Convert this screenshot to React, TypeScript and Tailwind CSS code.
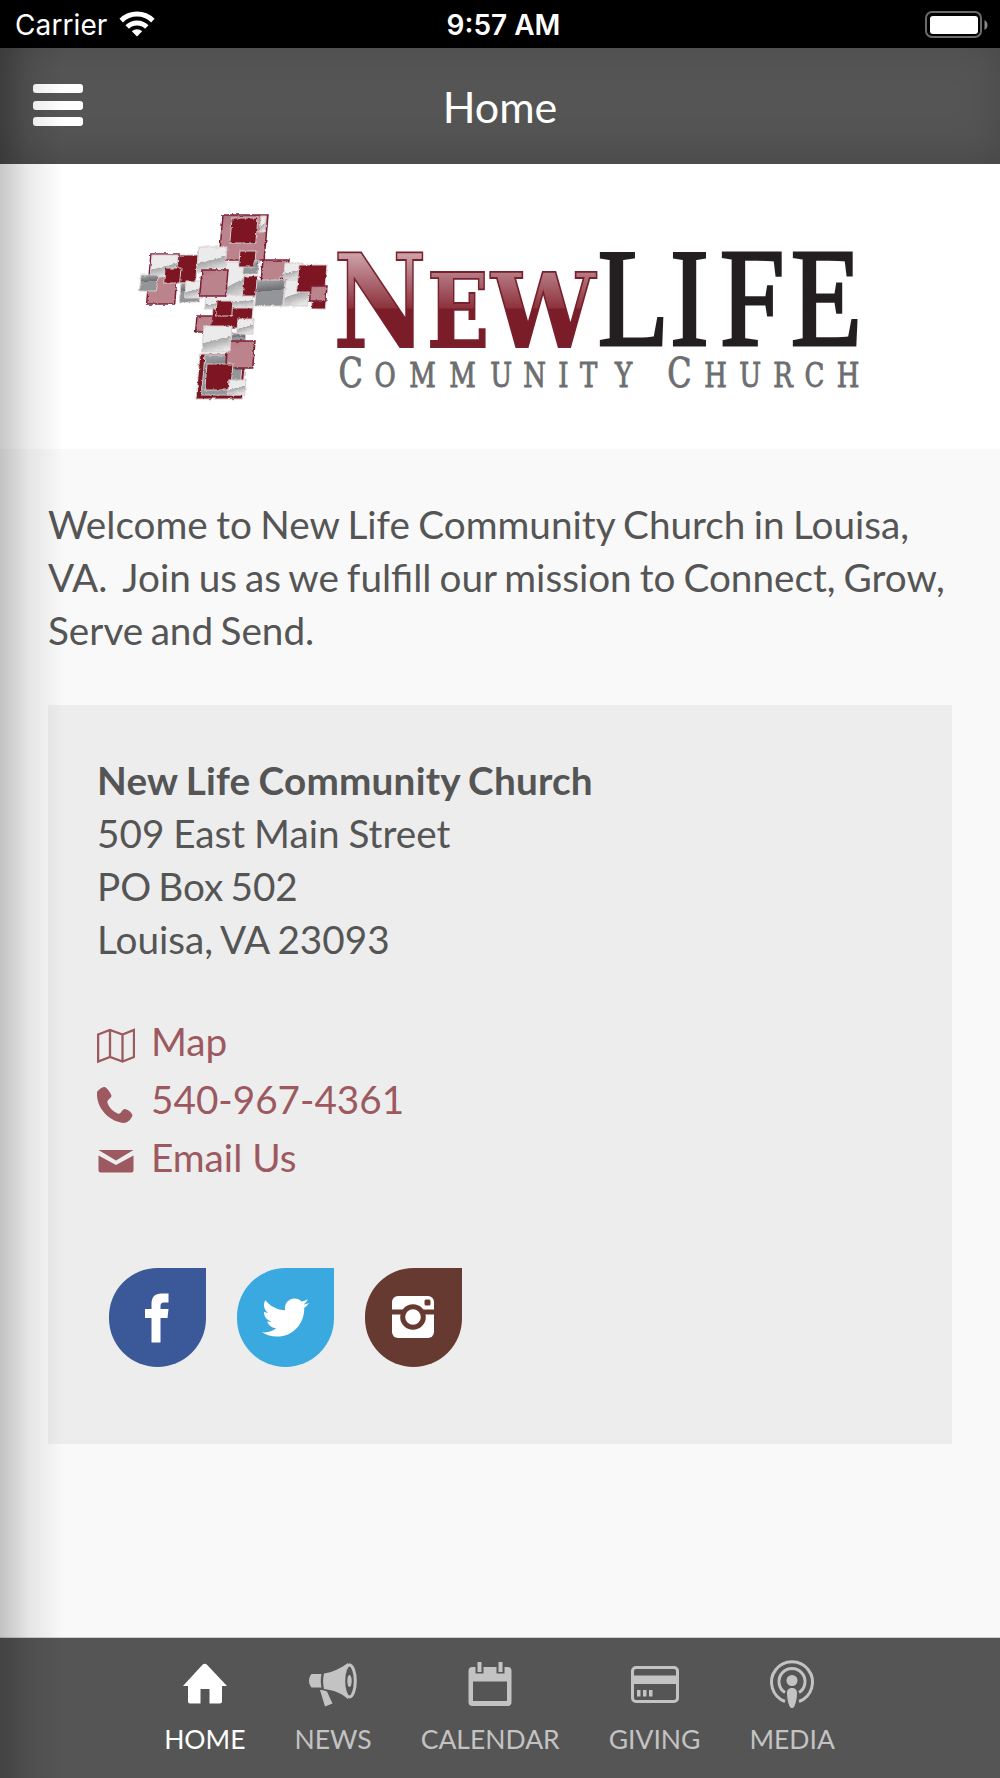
import type { ReactNode } from "react";
import { FaTwitter } from "react-icons/fa";

function StatusBar() {
  return (
    <div className="grid h-12 grid-cols-3 items-center bg-black pl-[15px] pr-3 pt-px font-['Inter',sans-serif] text-[28px] leading-none text-white">
      <div className="flex items-center gap-3">
        <span className="tracking-[0.1px]">Carrier</span>
        <svg className="-mt-px" width="36" height="26" viewBox="0 0 36 26" fill="none" stroke="white" strokeWidth="5">
          <path d="M2.2 9.6a22.5 22.5 0 0 1 31.6 0" />
          <path d="M8.2 16a14 14 0 0 1 19.6 0" />
          <path d="M12.8 20.3a7.6 7.6 0 0 1 10.4 0L18 25.5z" fill="white" stroke="none" />
        </svg>
      </div>
      <span className="pl-1 text-center font-semibold">9:57 AM</span>
      <svg className="justify-self-end" width="63" height="28" viewBox="0 0 63 28">
        <rect x="1" y="1" width="55" height="25" rx="6" fill="none" stroke="#6b6b6b" strokeWidth="2" />
        <rect x="5" y="5" width="48" height="18" rx="3" fill="white" />
        <path d="M59.500 9c4 2 4 8 0 10z" fill="#8a8a8a" />
      </svg>
    </div>
  );
}

function Header() {
  return (
    <header className="grid h-[116px] grid-cols-3 items-center bg-[#555] px-[33px] shadow-[inset_0_-7px_40px_rgba(0,0,0,0.17)]">
      <button className="-mt-0.5 flex w-[50px] flex-col gap-[7.5px]" aria-label="Menu">
        <span className="h-[9px] rounded-[3px] bg-white" />
        <span className="h-[9px] rounded-[3px] bg-white" />
        <span className="h-[9px] rounded-[3px] bg-white" />
      </button>
      <h1 className="mt-px text-center text-[43px] leading-none text-white">Home</h1>
    </header>
  );
}

// x, y, width, height, fill
const TILES: [number, number, number, number, string][] = [
  [223, 215, 45, 45, "url(#rose)"],
  [261, 216, 5, 16, "url(#silver)"],
  [232, 218, 26, 25, "#7d1824"],
  [179, 255, 19, 28, "#7d1824"],
  [181, 283, 20, 19, "url(#gray)"],
  [151, 254, 28, 50, "url(#rose)"],
  [152, 255, 26, 22, "url(#silver)"],
  [165, 268, 16, 15, "#7d1824"],
  [141, 275, 17, 16, "url(#gray)"],
  [226, 262, 22, 40, "url(#silver)"],
  [199, 247, 28, 25, "url(#silver)"],
  [206, 295, 48, 14, "url(#silver)"],
  [186, 281, 18, 17, "url(#silver)"],
  [202, 270, 26, 26, "url(#rose)"],
  [244, 260, 15, 14, "url(#gray)"],
  [244, 276, 14, 20, "#7d1824"],
  [240, 251, 16, 16, "#7d1824"],
  [263, 260, 26, 22, "url(#rose)"],
  [280, 277, 8, 8, "#7d1824"],
  [285, 263, 18, 16, "url(#silver)"],
  [286, 280, 24, 26, "url(#silver)"],
  [257, 280, 28, 26, "url(#gray)"],
  [313, 290, 14, 19, "#7d1824"],
  [299, 265, 28, 27, "#7d1824"],
  [311, 286, 16, 15, "url(#rose)"],
  [213, 308, 40, 20, "#7d1824"],
  [217, 301, 16, 15, "#7d1824"],
  [197, 316, 16, 16, "url(#rose)"],
  [232, 333, 14, 10, "url(#gray)"],
  [238, 319, 16, 15, "url(#silver)"],
  [200, 354, 46, 45, "#7d1824"],
  [205, 355, 38, 40, "url(#gray)"],
  [228, 341, 27, 27, "url(#rose)"],
  [204, 326, 28, 26, "url(#silver)"],
  [207, 364, 26, 26, "#7d1824"],
  [229, 380, 17, 15, "url(#silver)"],
];

function Logo() {
  return (
    <svg className="block w-full" height="285" viewBox="0 164 1000 285">
      <defs>
        <linearGradient id="silver" x1="0.2" y1="0" x2="0.5" y2="1">
          <stop offset="0.55" stopColor="#ebebeb" />
          <stop offset="0.57" stopColor="#a9a9ab" />
          <stop offset="1" stopColor="#e6e6e6" />
        </linearGradient>
        <linearGradient id="gray" x1="0" y1="0" x2="0.1" y2="1">
          <stop offset="0" stopColor="#a3a5a8" />
          <stop offset="0.45" stopColor="#6c6d70" />
          <stop offset="0.46" stopColor="#939598" />
        </linearGradient>
        <linearGradient id="rose" x1="0" y1="0" x2="0.3" y2="1">
          <stop offset="0" stopColor="#b07680" />
          <stop offset="0.3" stopColor="#bb838c" />
        </linearGradient>
        <linearGradient id="wine" gradientUnits="userSpaceOnUse" x1="0" y1="252" x2="0" y2="347">
          <stop offset="0" stopColor="#cfa6ac" />
          <stop offset="0.3" stopColor="#ad6b74" />
          <stop offset="0.59" stopColor="#8d323c" />
          <stop offset="0.6" stopColor="#7a1d28" />
        </linearGradient>
        <filter id="rough">
          <feTurbulence type="fractalNoise" baseFrequency="0.25" numOctaves="2" seed="4" />
          <feDisplacementMap in="SourceGraphic" scale="3" xChannelSelector="R" yChannelSelector="G" />
        </filter>
      </defs>

      <g filter="url(#rough)">
        {TILES.map(([x, y, w, h, fill]) => (
          <g key={`${x}-${y}`} transform={`translate(${x} ${y}) skewX(-5)`}>
            <rect
              width={w}
              height={h}
              fill={fill}
              stroke={fill === "url(#rose)" ? "#7d1f36" : "#d6cdcf"}
              strokeWidth={fill === "url(#rose)" ? 1.5 : 1}
            />
          </g>
        ))}
      </g>

      <g fill="url(#wine)" stroke="#78202d" strokeWidth="1.800" fontFamily="DejaVu Serif" fontWeight="700">
        <text x="333.500" y="346.500" fontSize="129" textLength="93" lengthAdjust="spacingAndGlyphs">N</text>
        <text x="427" y="346.500" fontSize="103" textLength="62" lengthAdjust="spacingAndGlyphs">E</text>
        <text x="491" y="346.500" fontSize="103" textLength="104.500" lengthAdjust="spacingAndGlyphs">W</text>
      </g>
      <g transform="scale(0.84 1)" fontFamily="Liberation Serif">
        <text x="711.500 797.500 857 941.500" y="345" fontSize="139" fill="#231f20" stroke="#231f20" strokeWidth="3">
          LIFE
        </text>
      </g>
      <g
        transform="scale(0.86 1)"
        fill="#6d6e71"
        stroke="#6d6e71"
        strokeWidth="0.900"
        fontFamily="DejaVu Serif Condensed, DejaVu Serif"
        fontSize="33.500"
      >
        <text y="387">
          <tspan x="393.500" fontSize="41">C</tspan>
          <tspan x="435.500 476 522.500 570 608.500 649 674.500 715">OMMUNITY</tspan>
        </text>
        <text y="387">
          <tspan x="776" fontSize="41">C</tspan>
          <tspan x="819 859.500 899 935.500 973">HURCH</tspan>
        </text>
      </g>
    </svg>
  );
}

function ContactLink({ icon, children }: { icon: ReactNode; children: ReactNode }) {
  return (
    <a href="#" className="flex h-[58px] items-center gap-4 text-[#9c5960]">
      {icon}
      <span>{children}</span>
    </a>
  );
}

function SocialButton({ color, label, children }: { color: string; label: string; children: ReactNode }) {
  return (
    <a
      href="#"
      aria-label={label}
      className={`flex h-[99px] w-[97px] items-center justify-center rounded-full rounded-tr-none text-white ${color}`}
    >
      {children}
    </a>
  );
}

function ContactCard() {
  return (
    <section className="mt-12 h-[739px] bg-[#ededed] px-[49px] pt-[49px]">
      <address className="whitespace-nowrap not-italic">
        <strong className="block tracking-[0.2px] [word-spacing:-1.4px]">New Life Community Church</strong>
        <span className="block [word-spacing:-1px]">509 East Main Street</span>
        <span className="block [word-spacing:-2.8px]">PO Box 502</span>
        <span className="block [word-spacing:-1.5px]">Louisa, VA 23093</span>
      </address>

      <div className="mt-[46px]">
        <ContactLink
          icon={
            <svg className="mt-2.5" width="38" height="36" viewBox="0.5 0 38 36" fill="none" stroke="currentColor" strokeWidth="2.3">
              <path d="M1.600 6.500 13.500 2l12.500 4.500L37.500 2v27L26 33.500 13.500 29 1.600 33.500zM13.500 2v27M26 6.500v27" />
            </svg>
          }
        >
          Map
        </ContactLink>
        <ContactLink
          icon={
            <svg className="-mr-px -ml-px mt-3" width="40" height="38" viewBox="0 0 40 38" fill="currentColor">
              <path d="M1 6C3 3 6 1 9 1c3 2 5 5 6.500 8.500 0 3-5 4-4 7.500 2 5 5 8 10 10.500 4 1.500 4-4.500 7.500-4.500 3 .500 6 3 7.500 6-1 4-4 7-8 8C14 36 0 23 1 6z" />
            </svg>
          }
        >
          540-967-4361
        </ContactLink>
        <ContactLink
          icon={
            <svg className="mt-2" width="38" height="24" viewBox="0.5 0 38 24" fill="currentColor">
              <path d="M2 1h35L19.500 11.500zM2 6.500 19.500 16 37 6.500V21.500a2 2 0 0 1-2 2H4a2 2 0 0 1-2-2z" />
            </svg>
          }
        >
          Email Us
        </ContactLink>
      </div>

      <div className="ml-3 mt-[82px] flex gap-[31px]">
        <SocialButton color="bg-[#3b5998]" label="Facebook">
          <svg className="-ml-0.5" width="24" height="50" viewBox="0 0 24 50" fill="currentColor">
            <path d="M6.500 49.500V25H0v-9h6.500v-4.500C6.500 4 9.500.500 16.500.500H23.500V9.500H19c-2.700 0-3.500 1.200-3.500 3.500v3h8l-1 9h-7v24.500z" />
          </svg>
        </SocialButton>
        <SocialButton color="bg-[#3aa9e0]" label="Twitter">
          <FaTwitter size={47} />
        </SocialButton>
        <SocialButton color="bg-[#663a31]" label="Instagram">
          <svg className="-ml-0.5 -mt-px" width="42" height="42" viewBox="0 0 42 42">
            <rect width="42" height="42" rx="6" fill="white" />
            <path d="M0 13.500h42v5H0z" fill="#663a31" />
            <circle cx="21" cy="21" r="10.300" fill="white" stroke="#663a31" strokeWidth="5" />
            <rect x="32.500" y="3.500" width="6" height="6" rx="1.500" fill="#663a31" />
          </svg>
        </SocialButton>
      </div>
    </section>
  );
}

function TabItem({ label, active, children }: { label: string; active?: boolean; children: ReactNode }) {
  return (
    <a href="#" className={`flex flex-col items-center gap-[13px] ${active ? "text-white" : "text-[#c3c3c3]"}`}>
      <svg width="50" height="50" viewBox="0 0 50 50" fill="currentColor">
        {children}
      </svg>
      <span className="text-[26.5px] leading-8">{label}</span>
    </a>
  );
}

function TabBar() {
  return (
    <nav className="flex h-[141px] justify-center gap-[49px] border-t border-[#d0d0d0] bg-[#555] pr-px pt-[22px]">
      <TabItem label="HOME" active>
        <path d="M22.500 4.800a3 3 0 0 1 4.500 0L47 26h-5v15.500a2 2 0 0 1-2 2H29.500V29h-9v14.500H10a2 2 0 0 1-2-2V26H3z" />
      </TabItem>
      <TabItem label="NEWS">
        <path d="M3.500 14h10c-1 5-1 9 0 13.500h-10c-3.300-4-3.300-9.500 0-13.500zM16 13.500C26 12 33 8 40 3v36c-6-5-12-8.500-24-10-1-5-1.300-10 0-15.500zM12 30c3 0 5.500.700 7 1.500l5.500 12-7.500 3z" />
        <ellipse cx="41.500" cy="21" rx="5.800" ry="16" fill="#555" stroke="currentColor" strokeWidth="3" />
        <ellipse cx="41.500" cy="21" rx="2.200" ry="6" />
      </TabItem>
      <TabItem label="CALENDAR">
        <path
          fillRule="evenodd"
          d="M12.500 2h4v10h-4zM33.500 2h4v10h-4zM7.500 7H10.500v6.500h8V7H31.500v6.500h8V7h3a4 4 0 0 1 4 4v31a4 4 0 0 1-4 4h-35a4 4 0 0 1-4-4V11a4 4 0 0 1 4-4zM8 21.500v19.500h34V21.500z"
        />
      </TabItem>
      <TabItem label="GIVING">
        <rect x="2.500" y="7.500" width="45" height="34" rx="3.500" fill="none" stroke="currentColor" strokeWidth="3" />
        <path d="M2 15.500h46V24H2zM7 30h3.500v6.500H7zM13 30h3.500v6.500H13zM19 30h3.500v6.500H19z" />
      </TabItem>
      <TabItem label="MEDIA">
        <g fill="none" stroke="currentColor" strokeWidth="3">
          <path d="M18 41.500a20.500 20.500 0 1 1 14 0" />
          <path d="M18 32.500a13 13 0 1 1 14 0" />
        </g>
        <circle cx="25" cy="20.500" r="5.500" />
        <path d="M20 33c0-3.500 2-5 5-5s5 1.500 5 5c0 6-1.500 11-2.500 13-1 2.700-4 2.700-5 0-1-2-2.500-7-2.500-13z" />
      </TabItem>
    </nav>
  );
}

export default function App() {
  return (
    <div className="relative flex h-[1778px] w-[1000px] flex-col overflow-hidden bg-[#f9f9f9] font-['Lato',sans-serif] text-[38.7px] leading-[53px] text-[#555]">
      <StatusBar />
      <Header />
      <div className="bg-white">
        <Logo />
      </div>
      <main className="flex-1 px-12 pt-[49px]">
        <p className="whitespace-nowrap">
          <span className="block [word-spacing:-1.5px]">Welcome to New Life Community Church in Louisa,</span>
          <span className="block [word-spacing:-1.9px]">VA.&nbsp; Join us as we fulfill our mission to Connect, Grow,</span>
          <span className="block [word-spacing:-2.5px]">Serve and Send.</span>
        </p>
        <ContactCard />
      </main>
      <TabBar />
      {/* shadow cast by the off-canvas menu */}
      <div className="pointer-events-none absolute bottom-0 left-0 top-12 w-16 bg-linear-to-r from-black/22 via-black/8 via-45% to-transparent" />
    </div>
  );
}
